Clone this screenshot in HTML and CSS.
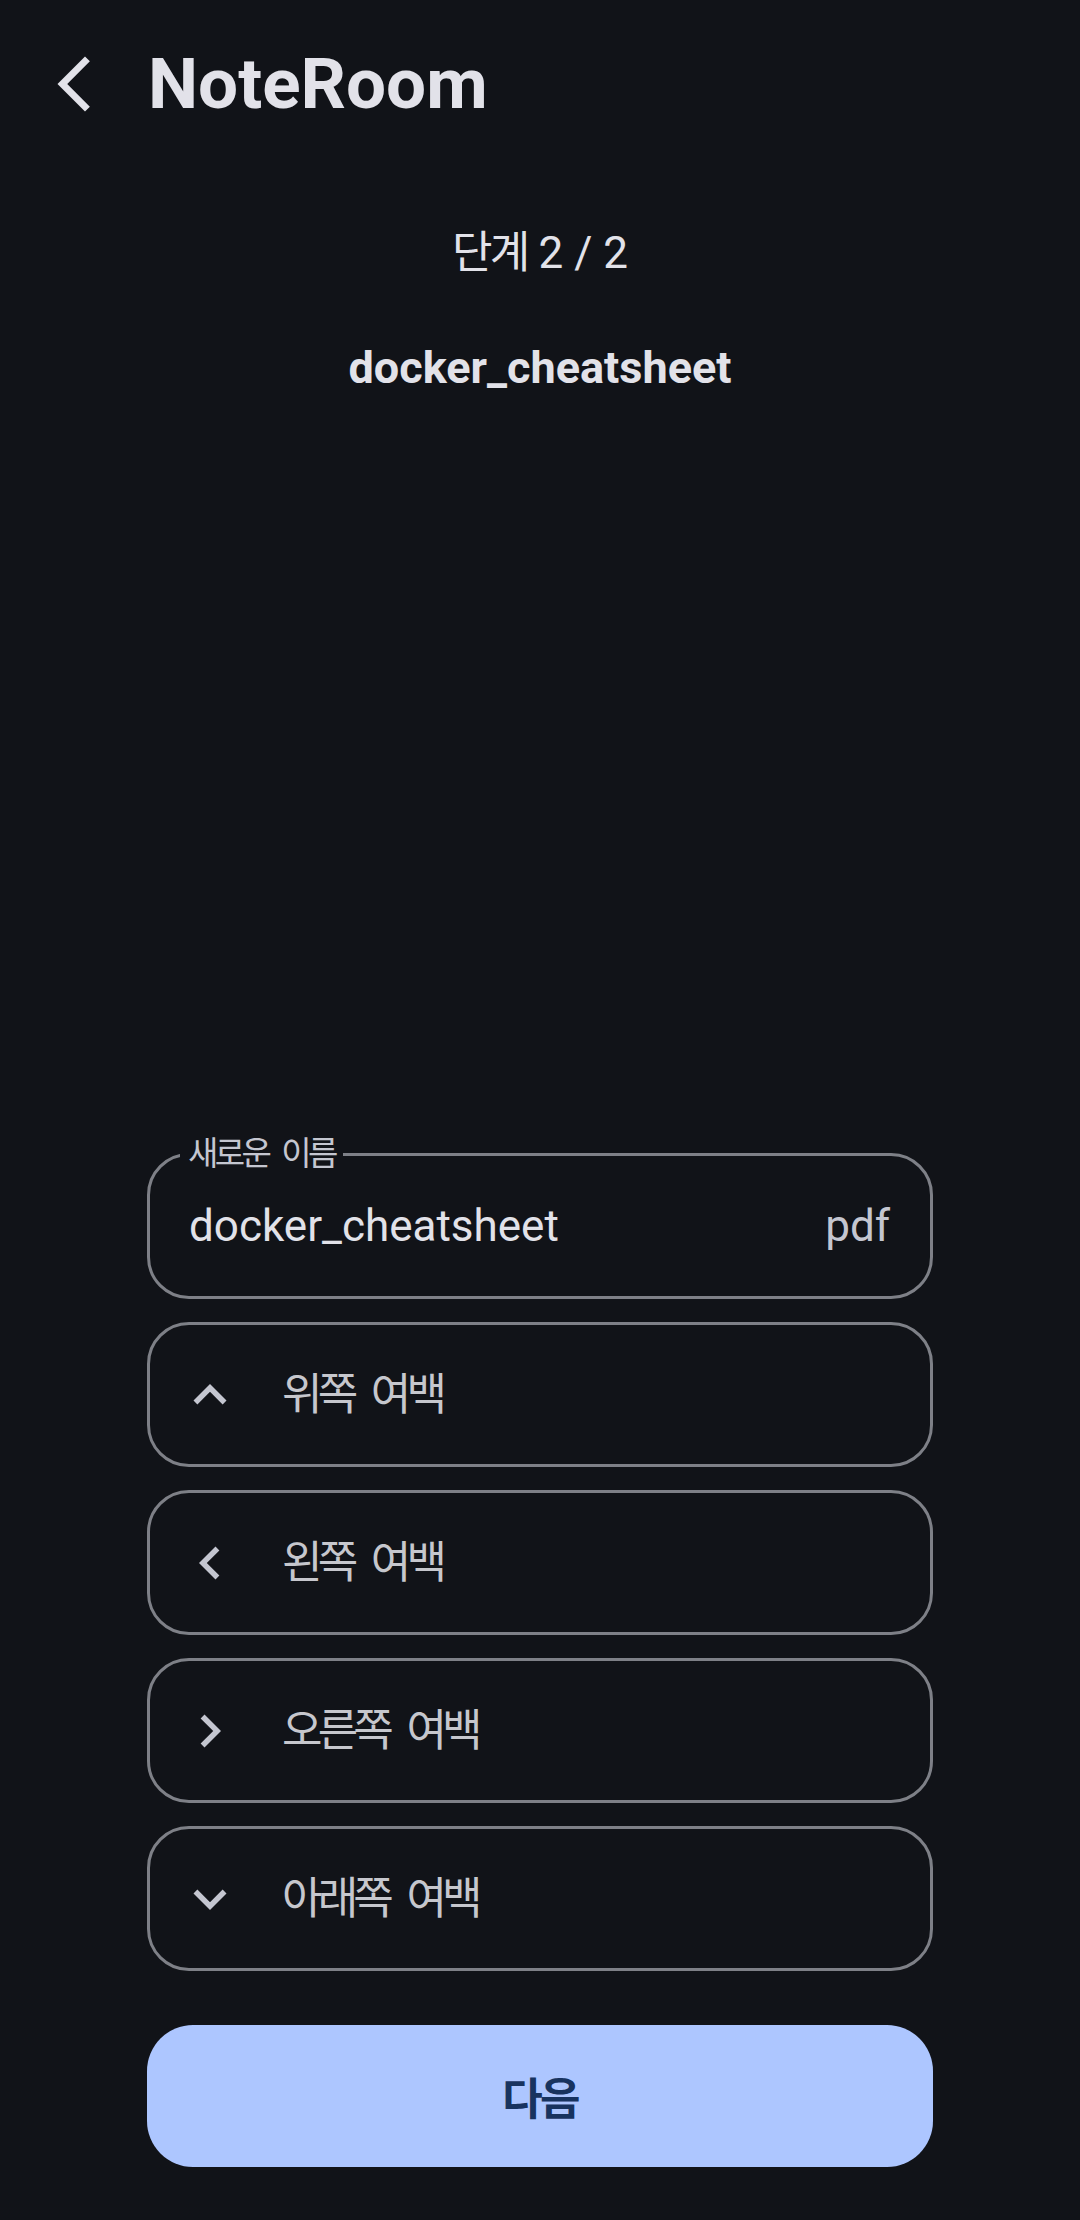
FILE: index.html
```html
<!DOCTYPE html>
<html lang="ko">
<head>
<meta charset="utf-8">
<link rel="stylesheet" href="styles.css">
<title>NoteRoom</title>
</head>
<body>
<div class="screen">
  <header class="topbar">
    <span class="back">
      <svg viewBox="0 0 24 24" width="66" height="66"><path d="M17.77 3.77 16 2 6 12l10 10 1.77-1.77L9.54 12z" fill="#e2e2e9"/></svg>
    </span>
    <h1 class="title">NoteRoom</h1>
  </header>

  <div class="step"><span class="ko">단계</span> 2 / 2</div>
  <div class="filename">docker_cheatsheet</div>

  <div class="preview"></div>

  <div class="form">
    <div class="field">
      <span class="field-label ko-words">새로운 이름</span>
      <span class="field-value">docker_cheatsheet</span>
      <span class="field-suffix">pdf</span>
    </div>

    <div class="option">
      <span class="opt-icon"><svg viewBox="0 0 24 24" width="66" height="66"><path d="M7.41 15.41 12 10.83l4.59 4.58L18 14l-6-6-6 6z" fill="#c4c6d0"/></svg></span>
      <span class="opt-text ko-words">위쪽 여백</span>
    </div>
    <div class="option">
      <span class="opt-icon"><svg viewBox="0 0 24 24" width="66" height="66"><path d="M15.41 16.59 10.83 12l4.58-4.59L14 6l-6 6 6 6 1.41-1.41z" fill="#c4c6d0"/></svg></span>
      <span class="opt-text ko-words">왼쪽 여백</span>
    </div>
    <div class="option">
      <span class="opt-icon"><svg viewBox="0 0 24 24" width="66" height="66"><path d="M8.59 16.59 13.17 12 8.59 7.41 10 6l6 6-6 6-1.41-1.41z" fill="#c4c6d0"/></svg></span>
      <span class="opt-text ko-words">오른쪽 여백</span>
    </div>
    <div class="option">
      <span class="opt-icon"><svg viewBox="0 0 24 24" width="66" height="66"><path d="M7.41 8.59 12 13.17l4.59-4.58L18 10l-6 6-6-6 1.41-1.41z" fill="#c4c6d0"/></svg></span>
      <span class="opt-text ko-words">아래쪽 여백</span>
    </div>

    <button class="next ko">다음</button>
  </div>
</div>
</body>
</html>
```

FILE: styles.css
```css
html, body {
  margin: 0;
  padding: 0;
  background: #111318;
}

body {
  font-family: Roboto, "Noto Sans CJK KR", sans-serif;
  color: #e2e2e9;
}

.ko {
  letter-spacing: -0.06em;
}

.ko-words {
  letter-spacing: -0.11em;
  word-spacing: 0.26em;
}

.screen {
  width: 1080px;
  height: 2220px;
  display: flex;
  flex-direction: column;
  box-sizing: border-box;
  padding-bottom: 53px;
}

.topbar {
  height: 168px;
  display: flex;
  align-items: center;
  padding-left: 41px;
  box-sizing: border-box;
}

.back {
  width: 66px;
  height: 66px;
  display: flex;
}

.title {
  margin: 0 0 0 41px;
  font-size: 71px;
  font-weight: 700;
  line-height: 80px;
  color: #e2e2e9;
}

.step {
  margin-top: 59px;
  text-align: center;
  font-size: 44px;
  line-height: 52px;
  color: #e2e2e9;
}

.filename {
  margin-top: 63px;
  text-align: center;
  font-size: 45px;
  font-weight: 700;
  line-height: 52px;
  color: #e2e2e9;
}

.preview {
  flex: 1;
}

.form {
  margin: 0 147px;
  display: flex;
  flex-direction: column;
  gap: 23px;
}

.field {
  position: relative;
  height: 146px;
  box-sizing: border-box;
  border: 3px solid #7e8087;
  border-radius: 42px;
  display: flex;
  align-items: center;
  justify-content: space-between;
  padding: 0 40px 0 39px;
}

.field-label {
  position: absolute;
  top: -22px;
  left: 30px;
  padding: 0 8px;
  background: #111318;
  font-size: 33px;
  line-height: 40px;
  color: #c4c6d0;
}

.field-value {
  font-size: 44px;
  line-height: 52px;
  color: #e2e2e9;
}

.field-suffix {
  font-size: 44px;
  line-height: 52px;
  color: #c4c6d0;
}

.option {
  height: 145px;
  box-sizing: border-box;
  border: 3px solid #7e8087;
  border-radius: 42px;
  display: flex;
  align-items: center;
  padding-left: 27px;
}

.opt-icon {
  width: 66px;
  height: 66px;
  display: flex;
}

.opt-text {
  margin-left: 39px;
  font-size: 44px;
  line-height: 52px;
  color: #c6c7cd;
}

.next {
  margin-top: 31px;
  height: 142px;
  border: none;
  border-radius: 46px;
  background: #adc6ff;
  color: #18335f;
  font-family: Roboto, "Noto Sans CJK KR", sans-serif;
  font-size: 44px;
  font-weight: 700;
  cursor: pointer;
}
```
